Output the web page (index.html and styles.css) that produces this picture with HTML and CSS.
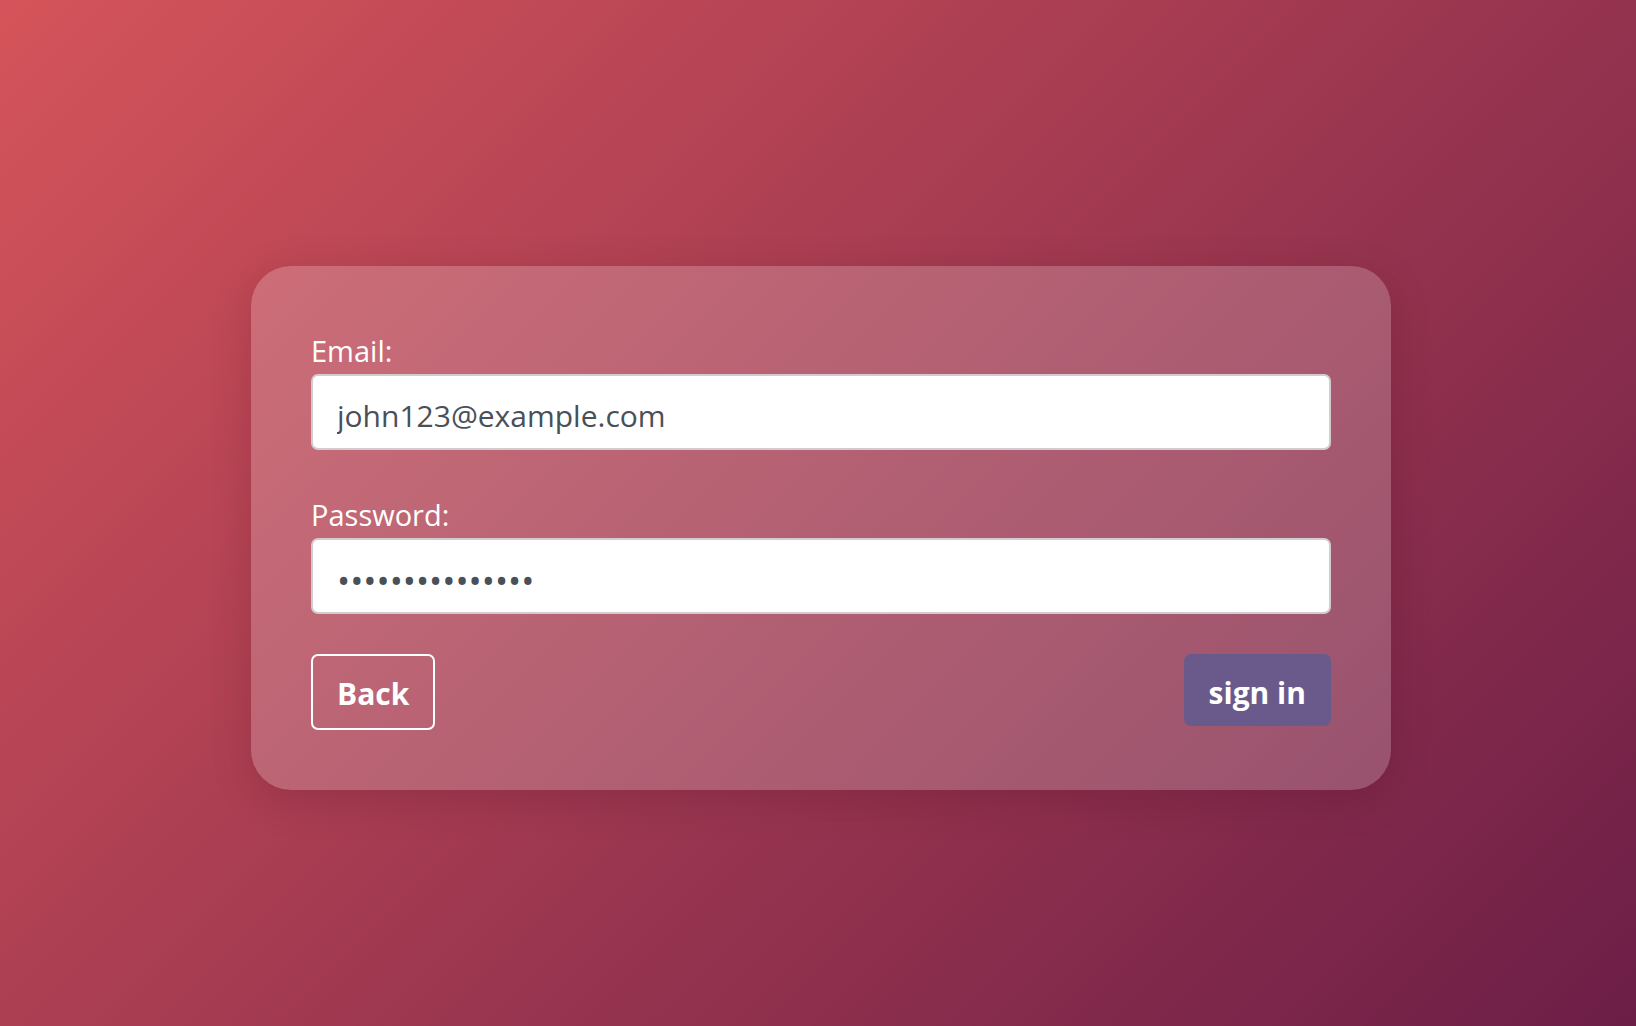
FILE: index.html
```html
<!DOCTYPE html>
<html lang="en">
<head>
<meta charset="utf-8">
<title>Sign in</title>
<link rel="stylesheet" href="styles.css">
</head>
<body>
<main class="page">
  <form class="card">
    <div class="field">
      <label class="label" for="email">Email:</label>
      <input class="input" id="email" type="email" value="john123@example.com">
    </div>
    <div class="field">
      <label class="label" for="password">Password:</label>
      <input class="input input-password" id="password" type="password" value="johnpassword123">
    </div>
    <div class="actions">
      <button class="btn btn-back" type="button">Back</button>
      <button class="btn btn-primary" type="submit">sign in</button>
    </div>
  </form>
</main>
</body>
</html>
```

FILE: styles.css
```css
* { box-sizing: border-box; }

html, body {
  margin: 0;
  padding: 0;
}

body {
  font-family: "Open Sans", "Noto Sans", "Liberation Sans", sans-serif;
  background: linear-gradient(135deg, #d5545a 0%, #6c1e47 100%);
  min-height: 100vh;
}

.page {
  min-height: 100vh;
  display: flex;
  align-items: center;
  justify-content: center;
  padding: 30px 0 0 6px;
}

.card {
  width: 1140px;
  padding: 60px;
  border-radius: 40px;
  background: rgba(255, 255, 255, 0.2);
  box-shadow: 0 10px 40px rgba(60, 0, 20, 0.18);
}

.field {
  margin-bottom: 40px;
}

.label {
  display: block;
  color: #ffffff;
  font-size: 29px;
  line-height: 46px;
  padding-top: 2px;
}

.input {
  display: block;
  width: 100%;
  height: 76px;
  padding: 6px 24px 0;
  border: 2px solid #d3cbd0;
  border-radius: 7px;
  background: #ffffff;
  color: #495057;
  font-family: inherit;
  font-size: 30px;
  outline: none;
}

.input-password {
  font-size: 35px;
  padding-top: 8px;
}

.actions {
  display: flex;
  justify-content: space-between;
  align-items: flex-start;
}

.btn {
  font-family: inherit;
  font-weight: 700;
  font-size: 30px;
  color: #ffffff;
  padding: 0 24px;
  border-radius: 7px;
  cursor: pointer;
}

.btn-back {
  height: 76px;
  border: 2px solid #ffffff;
  background: transparent;
  padding-top: 2px;
}

.btn-primary {
  height: 72px;
  border: none;
  background: #6a5a8b;
  padding: 4px 25px 0;
}
```
